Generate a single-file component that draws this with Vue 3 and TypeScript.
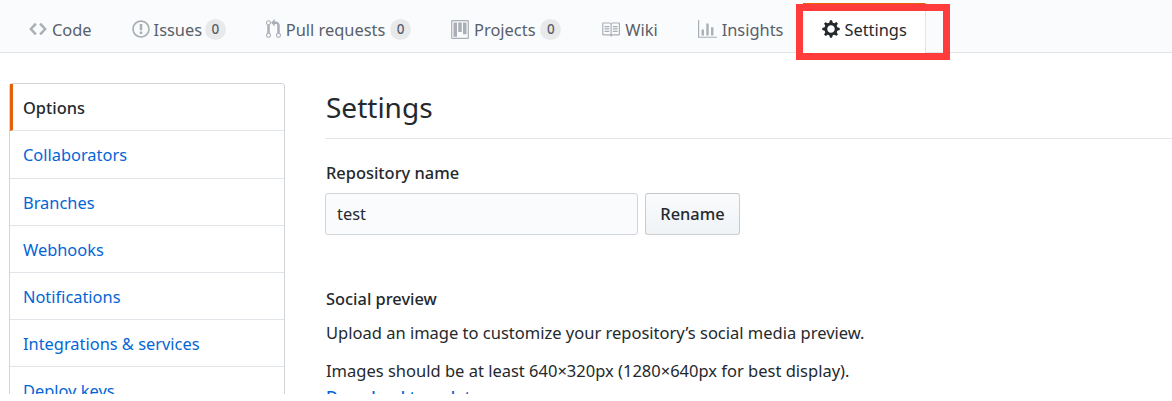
<script setup lang="ts">
const menu = ['Collaborators', 'Branches', 'Webhooks', 'Notifications', 'Integrations & services', 'Deploy keys']
</script>

<template>
  <div class="page">
    <nav class="tabs">
      <a class="tab">
        <svg width="18" height="20" viewBox="0 0 14 16"><path fill-rule="evenodd" d="M9.500 3L8 4.500 11.500 8 8 11.500 9.500 13 14 8 9.500 3zm-5 0L0 8l4.500 5L6 11.500 2.500 8 6 4.500 4.500 3z"/></svg>
        <span>Code</span>
      </a>
      <a class="tab issues">
        <svg width="18" height="20" viewBox="0 0 14 16"><path fill-rule="evenodd" d="M7 2.300c3.140 0 5.700 2.560 5.700 5.700s-2.560 5.700-5.700 5.700A5.710 5.710 0 0 1 1.300 8c0-3.140 2.560-5.700 5.700-5.700zM7 1C3.140 1 0 4.140 0 8s3.140 7 7 7 7-3.140 7-7-3.140-7-7-7zm1 3H6v5h2V4zm0 6H6v2h2v-2z"/></svg>
        <span>Issues</span><b class="count">0</b>
      </a>
      <a class="tab">
        <svg width="15" height="20" viewBox="0 0 12 16"><path fill-rule="evenodd" d="M11 11.280V5c-.030-.780-.340-1.470-.940-2.060C9.460 2.350 8.780 2.030 8 2H7V0L4 3l3 3V4h1c.270.020.480.110.690.310.210.200.300.420.310.690v6.280A1.993 1.993 0 0 0 10 15a1.993 1.993 0 0 0 1-3.720zm-1 2.920c-.660 0-1.200-.550-1.200-1.200 0-.650.550-1.200 1.200-1.200.650 0 1.200.550 1.200 1.200 0 .650-.550 1.200-1.200 1.200zM4 3c0-1.110-.890-2-2-2a1.993 1.993 0 0 0-1 3.720v6.560A1.993 1.993 0 0 0 2 15a1.993 1.993 0 0 0 1-3.720V4.720c.590-.340 1-.980 1-1.720zm-.800 10c0 .660-.550 1.200-1.200 1.200-.650 0-1.200-.550-1.200-1.200 0-.650.550-1.200 1.200-1.200.650 0 1.200.550 1.200 1.200zM2 4.200C1.340 4.200.800 3.650.800 3c0-.650.550-1.200 1.200-1.200.650 0 1.200.550 1.200 1.200 0 .650-.550 1.200-1.200 1.200z"/></svg>
        <span>Pull requests</span><b class="count">0</b>
      </a>
      <a class="tab">
        <svg width="18" height="19" viewBox="0 0 15 16"><path fill-rule="evenodd" d="M10 12h3V2h-3v10zm-4-2h3V2H6v8zm-4 4h3V2H2v12zm-1 1h13V1H1v14zM14 0H1a1 1 0 0 0-1 1v14a1 1 0 0 0 1 1h13a1 1 0 0 0 1-1V1a1 1 0 0 0-1-1z"/></svg>
        <span>Projects</span><b class="count">0</b>
      </a>
      <a class="tab">
        <svg width="19" height="19" viewBox="0 0 16 16"><path fill-rule="evenodd" d="M3 5h4v1H3V5zm0 3h4V7H3v1zm0 2h4V9H3v1zm11-5h-4v1h4V5zm0 2h-4v1h4V7zm0 2h-4v1h4V9zm2-6v9c0 .550-.450 1-1 1H9.500l-1 1-1-1H2c-.550 0-1-.450-1-1V3c0-.550.450-1 1-1h5.500l1 1 1-1H15c.550 0 1 .450 1 1zm-8 .500L7.500 3H2v9h6V3.500zm7-.500H9.500l-.500.500V12h6V3z"/></svg>
        <span>Wiki</span>
      </a>
      <a class="tab">
        <svg width="19" height="19" viewBox="0 0 16 16"><path fill-rule="evenodd" d="M16 14v1H0V0h1v14h15zM5 13H3V8h2v5zm4 0H7V3h2v10zm4 0h-2V6h2v7z"/></svg>
        <span>Insights</span>
      </a>
      <a class="tab selected">
        <svg width="18" height="20" viewBox="0 0 14 16"><path fill-rule="evenodd" d="M14 8.770v-1.600l-1.940-.640-.450-1.090.880-1.840-1.130-1.130-1.810.910-1.090-.450-.690-1.920h-1.600l-.630 1.940-1.110.450-1.840-.880-1.130 1.130.910 1.810-.450 1.090L0 7.230v1.590l1.940.640.450 1.090-.880 1.840 1.130 1.130 1.810-.910 1.090.450.690 1.920h1.590l.630-1.940 1.110-.450 1.840.880 1.130-1.130-.920-1.810.470-1.090L14 8.750v.020zM7 11c-1.660 0-3-1.340-3-3s1.340-3 3-3 3 1.340 3 3-1.340 3-3 3z"/></svg>
        <span>Settings</span>
      </a>
      <div class="highlight"></div>
    </nav>
    <div class="body">
      <aside class="menu">
        <div class="item current">Options</div>
        <a v-for="m in menu" :key="m" class="item">{{ m }}</a>
      </aside>
      <main class="main">
        <h2 class="title">Settings</h2>
        <label class="label">Repository name</label>
        <div class="rename">
          <div class="input">test</div>
          <div class="btn">Rename</div>
        </div>
        <h4 class="social">Social preview</h4>
        <p class="p1">Upload an image to customize your repository’s social media preview.</p>
        <p class="p2">Images should be at least 640×320px (1280×640px for best display).</p>
        <a class="dl">Download template</a>
      </main>
    </div>
  </div>
</template>

<style>
html, body { margin: 0; background: #fff; overflow: hidden; }
</style>

<style scoped>
.page {
  width: 1172px;
  height: 394px;
  overflow: hidden;
  position: relative;
  font-family: "Noto Sans", "Open Sans", sans-serif;
  font-size: 16.4px;
  color: #24292e;
  background: #fff;
}
.tabs {
  height: 52px;
  background: #fafbfc;
  border-bottom: 1px solid #e1e4e8;
  display: flex;
  align-items: flex-start;
  padding-left: 9px;
}
.tab {
  height: 44px;
  margin-top: 7px;
  padding: 0 20px 0;
  display: flex;
  align-items: center;
  gap: 5px;
  color: #586069;
  box-sizing: border-box;
}
.tab svg { fill: #a9afb5; flex: none; }
.count {
  font-size: 13.5px;
  font-weight: 500;
  color: #586069;
  background: rgba(27, 31, 35, .08);
  border-radius: 11px;
  padding: 0 6.500px;
  line-height: 21px;
}
.issues { gap: 4px; }
.issues .count { margin-left: -1px; }
.tab:nth-child(4) { padding-right: 20px; }
.selected {
  background: #fff;
  color: #24292e;
  height: 50px;
  margin-top: 3px;
  padding-top: 7px;
  padding-bottom: 6px;
  padding-left: 19px;
  padding-right: 18px;
  gap: 4px;
  border-top: 1px solid #e36209;
  border-right: 1px solid #e1e4e8;
}
.selected svg { fill: #24292e; }
.highlight {
  position: absolute;
  left: 796px;
  top: 4px;
  width: 154px;
  height: 56px;
  border: 7px solid #ff3b3b;
  box-sizing: border-box;
}
.body {
  display: flex;
  padding: 30px 0 0 9px;
}
.menu {
  width: 276px;
  flex: none;
  border: 1px solid #d1d5da;
  border-radius: 3px;
  box-sizing: border-box;
  align-self: flex-start;
}
.item {
  display: block;
  height: 47px;
  line-height: 48px;
  padding-left: 13px;
  color: #0366d6;
  border-bottom: 1px solid #e1e4e8;
  box-sizing: border-box;
}
.item:nth-child(2) { height: 48px; }
.current {
  color: #24292e;
  font-weight: 500;
  border-left: 3px solid #e36209;
  padding-left: 10px;
}
.main {
  margin-left: 40px;
  flex: 1;
}
.title {
  margin: 0;
  font-size: 28px;
  font-weight: 400;
  line-height: 49px;
  height: 55px;
  border-bottom: 1px solid #e1e4e8;
  text-indent: 1px;
}
.label {
  display: block;
  font-weight: 500;
  margin-top: 23px;
  line-height: 22px;
  text-indent: 1px;
}
.rename { display: flex; gap: 7px; margin-top: 9px; }
.input {
  width: 313px;
  height: 42px;
  box-sizing: border-box;
  border: 1px solid #d1d5da;
  border-radius: 3px;
  background: #fafbfc;
  padding-left: 11px;
  line-height: 40px;
}
.btn {
  width: 95px;
  height: 42px;
  box-sizing: border-box;
  border: 1px solid rgba(27, 31, 35, .2);
  border-radius: 3px;
  background: linear-gradient(#fafbfc, #eff3f6);
  text-align: center;
  font-weight: 500;
  line-height: 40px;
}
.social {
  margin: 52px 0 0;
  font-size: 16.4px;
  font-weight: 500;
  line-height: 24px;
  text-indent: 1px;
}
.p1 { margin: 10px 0 0; line-height: 24px; text-indent: 1px; font-size: 16.5px; }
.p2 { margin: 14px 0 0; line-height: 24px; text-indent: 1px; font-size: 16.5px; }
.dl { display: block; margin-top: 2px; color: #0366d6; font-weight: 500; line-height: 24px; text-indent: 1px; }
</style>
